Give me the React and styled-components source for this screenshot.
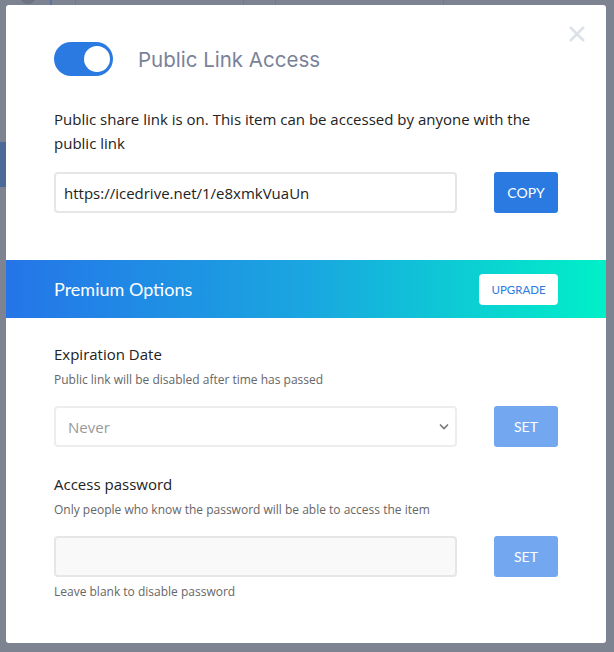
import React from 'react';
import styled, { createGlobalStyle } from 'styled-components';

const GlobalStyle = createGlobalStyle`
  html, body {
    margin: 0;
    padding: 0;
    background: #7e8392;
  }
  body {
    font-family: 'Open Sans', 'Noto Sans', sans-serif;
  }
`;

const colors = {
  blue: '#2a7ae2',
  blueLight: '#73a8f0',
  text: '#222',
  muted: '#666',
  border: '#e6e6e6'
};

const Backdrop = styled.div`
  position: relative;
  width: 614px;
  height: 652px;
  overflow: hidden;
  background: #7e8392;
  padding: 5px 8px 0 6px;
  box-sizing: border-box;
`;

const PageStrip = styled.div`
  position: absolute;
  left: 0;
  top: 142px;
  width: 6px;
  height: 45px;
  background: #4b6a99;
`;

const PageAvatar = styled.div`
  position: absolute;
  left: 20px;
  top: -12px;
  width: 16px;
  height: 16px;
  border-radius: 50%;
  background: #6e7383;
`;

const PageLine = styled.div`
  position: absolute;
  top: 0;
  left: ${p => p.left}px;
  width: ${p => p.w || 1}px;
  height: 5px;
  background: ${p => p.color || '#737888'};
`;

const Modal = styled.div`
  position: relative;
  background: #fff;
  border-radius: 3px;
  height: 638px;
  padding-top: 37px;
  box-sizing: border-box;
`;

const Section = styled.div`
  padding: 0 48px;
`;

const Close = styled.button`
  position: absolute;
  top: 20px;
  right: 20px;
  border: none;
  background: none;
  padding: 0;
  width: 18px;
  height: 18px;
  cursor: pointer;
`;

const Header = styled.div`
  display: flex;
  align-items: center;
  gap: 25px;
`;

const Toggle = styled.div`
  width: 59px;
  height: 34px;
  border-radius: 17px;
  background: ${colors.blue};
  position: relative;
  flex-shrink: 0;
  &::after {
    content: '';
    position: absolute;
    top: 4px;
    right: 3px;
    width: 26px;
    height: 26px;
    border-radius: 50%;
    background: #fff;
  }
`;

const Title = styled.h1`
  margin: 0;
  font-family: 'Inter', 'Noto Sans', sans-serif;
  font-weight: 400;
  font-size: 20.5px;
  color: #7a8299;
`;

const Intro = styled.p`
  margin: 31px 0 17px;
  font-size: 15px;
  line-height: 24px;
  color: ${colors.text};
`;

const Row = styled.div`
  display: flex;
  align-items: stretch;
  justify-content: space-between;
`;

const Field = styled.div`
  width: 403px;
  height: 41px;
  box-sizing: border-box;
  border: 2px solid ${p => (p.soft ? '#ededed' : colors.border)};
  border-radius: 4px;
  background: ${p => (p.filled ? '#f9f9f9' : '#fff')};
  display: flex;
  align-items: center;
  justify-content: space-between;
  padding: 0 6px 0 ${p => p.inset || 8}px;
  font-size: 15px;
  color: ${p => (p.muted ? '#999' : colors.text)};
`;

const ActionButton = styled.button`
  width: 64px;
  height: 41px;
  border: none;
  border-radius: 3px;
  background: ${p => (p.disabled ? colors.blueLight : colors.blue)};
  color: #fff;
  font-family: 'Lato', 'Liberation Sans', sans-serif;
  font-size: 14px;
  padding: 0;
  cursor: pointer;
`;

const Banner = styled.div`
  margin-top: 47px;
  height: 58px;
  background: linear-gradient(90deg, #2575e8 0%, #1aa6e0 50%, #00f0c8 100%);
  display: flex;
  align-items: center;
  justify-content: space-between;
  padding: 0 48px;
`;

const BannerTitle = styled.h2`
  margin: 0;
  font-family: 'Lato', 'Liberation Sans', sans-serif;
  font-weight: 400;
  font-size: 18px;
  color: #fff;
`;

const UpgradeButton = styled.button`
  width: 79px;
  height: 31px;
  border: none;
  border-radius: 4px;
  background: #fff;
  color: ${colors.blue};
  font-family: 'Lato', 'Liberation Sans', sans-serif;
  font-size: 11.5px;
  padding: 0;
`;

const Label = styled.div`
  margin-top: ${p => p.top}px;
  font-size: 15px;
  line-height: 20px;
  color: ${colors.text};
`;

const Hint = styled.div`
  margin: ${p => p.margin || '7px 0 17px'};
  font-size: 12px;
  line-height: 18px;
  color: ${colors.muted};
`;

const Chevron = () => (
  <svg width="10" height="7" viewBox="0 0 10 7" fill="none">
    <path d="M1 1.5L5 5.5L9 1.5" stroke="#777" strokeWidth="1.6" />
  </svg>
);

const CloseIcon = () => (
  <svg width="18" height="18" viewBox="0 0 18 18">
    <path d="M2 2L16 16M16 2L2 16" stroke="#dde1e8" strokeWidth="2.6" />
  </svg>
);

const App = () => (
  <>
    <GlobalStyle />
    <Backdrop>
      <PageAvatar />
      <PageLine left={50} w={2} color="#5a74a4" />
      <PageLine left={75} />
      <PageLine left={243} />
      <PageLine left={275} />
      <PageLine left={443} />
      <PageStrip />
      <Modal>
        <Close aria-label="Close">
          <CloseIcon />
        </Close>
        <Section>
          <Header>
            <Toggle />
            <Title>Public Link Access</Title>
          </Header>
          <Intro>
            Public share link is on. This item can be accessed by anyone with the public link
          </Intro>
          <Row>
            <Field>https://icedrive.net/1/e8xmkVuaUn</Field>
            <ActionButton>COPY</ActionButton>
          </Row>
        </Section>
        <Banner>
          <BannerTitle>Premium Options</BannerTitle>
          <UpgradeButton>UPGRADE</UpgradeButton>
        </Banner>
        <Section>
          <Label top={26}>Expiration Date</Label>
          <Hint>Public link will be disabled after time has passed</Hint>
          <Row>
            <Field soft muted inset={12}>
              <span>Never</span>
              <Chevron />
            </Field>
            <ActionButton disabled>SET</ActionButton>
          </Row>
          <Label top={27}>Access password</Label>
          <Hint>Only people who know the password will be able to access the item</Hint>
          <Row>
            <Field filled />
            <ActionButton disabled>SET</ActionButton>
          </Row>
          <Hint margin="6px 0 0">Leave blank to disable password</Hint>
        </Section>
      </Modal>
    </Backdrop>
  </>
);

export default App;
